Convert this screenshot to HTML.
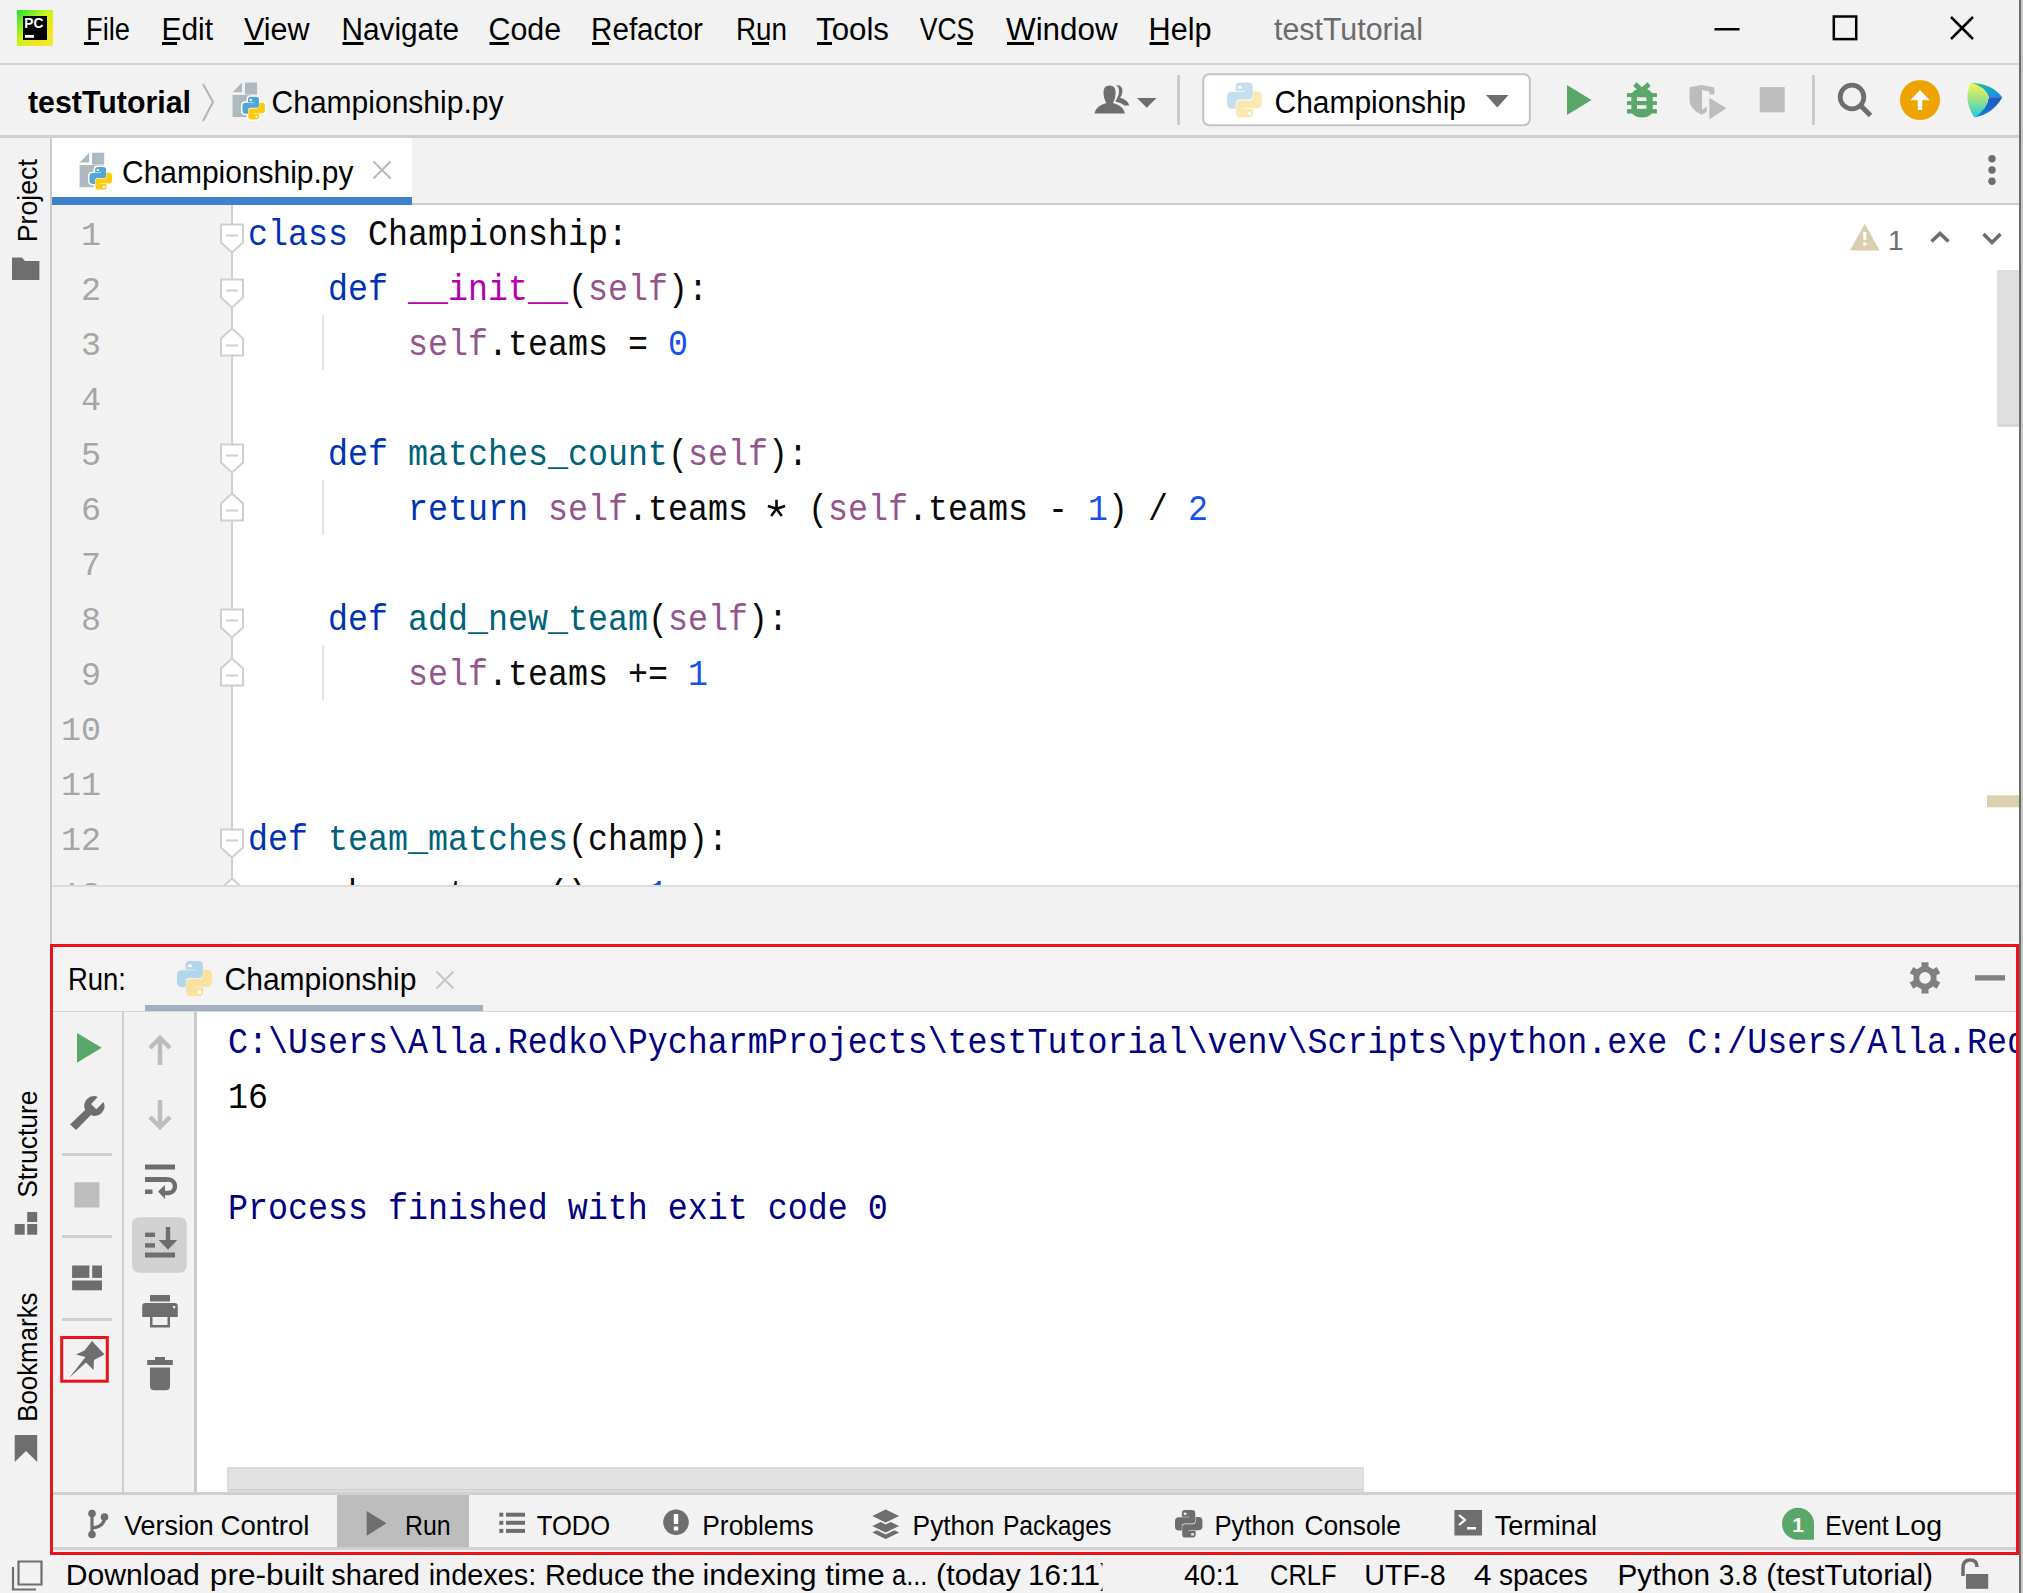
<!DOCTYPE html>
<html><head><meta charset="utf-8"><title>PyCharm</title>
<style>html,body{margin:0;padding:0;background:#f2f2f2;width:2023px;height:1593px;overflow:hidden}</style>
</head><body>
<svg width="2023" height="1593" viewBox="0 0 2023 1593" style="display:block"><rect x="0" y="0" width="2023" height="1593" fill="#f2f2f2" />
<rect x="0" y="63" width="2019" height="2" fill="#d5d5d5" />
<rect x="0" y="135" width="2019" height="3" fill="#cfcfcf" />
<rect x="50" y="138" width="2" height="806" fill="#c9c9c9" />
<rect x="52" y="138" width="360" height="59" fill="#ffffff" />
<rect x="52" y="197" width="360" height="8" fill="#3f82c9" />
<rect x="412" y="203" width="1607" height="2" fill="#cdcdcd" />
<rect x="52" y="205" width="180" height="680" fill="#f2f2f2" />
<rect x="232" y="205" width="1787" height="680" fill="#ffffff" />
<rect x="231" y="205" width="2" height="680" fill="#d0d0d0" />
<rect x="52" y="885" width="1967" height="2" fill="#dcdcdc" />
<rect x="232" y="942" width="1786" height="1" fill="#ffffff" />
<rect x="52" y="947" width="1964" height="64" fill="#f3f3f3" />
<rect x="52" y="1011" width="1964" height="1" fill="#d6d6d6" />
<rect x="145" y="1005" width="338" height="6" fill="#a5aebd" />
<rect x="52" y="1012" width="145" height="480" fill="#f2f2f2" />
<rect x="122" y="1012" width="2" height="480" fill="#cfcfcf" />
<rect x="194" y="1012" width="3" height="480" fill="#cbcbcb" />
<rect x="197" y="1012" width="1819" height="480" fill="#ffffff" />
<rect x="227" y="1467" width="1137" height="25" fill="#dcdcdc" />
<rect x="229" y="1469" width="1133" height="20" fill="#e2e2e2" />
<rect x="229" y="1489" width="1133" height="1" fill="#cccccc" />
<rect x="52" y="1492" width="1964" height="3" fill="#d0d0d0" />
<rect x="52" y="1495" width="1964" height="52" fill="#f2f2f2" />
<rect x="337" y="1495" width="132" height="52" fill="#bdbdbd" />
<rect x="52" y="1547" width="1964" height="3" fill="#cfcfcf" />
<rect x="2019" y="0" width="2" height="1593" fill="#6b6b6b" />
<rect x="2021" y="0" width="2" height="1593" fill="#c8c8c8" />
<text x="86" y="40" font-family="'Liberation Sans', sans-serif" font-size="31" fill="#000" font-weight="normal" textLength="44" lengthAdjust="spacingAndGlyphs" >File</text>
<rect x="84" y="42" width="15" height="3" fill="#000" />
<text x="161.5" y="40" font-family="'Liberation Sans', sans-serif" font-size="31" fill="#000" font-weight="normal" textLength="51.5" lengthAdjust="spacingAndGlyphs" >Edit</text>
<rect x="162" y="42" width="15" height="3" fill="#000" />
<text x="244" y="40" font-family="'Liberation Sans', sans-serif" font-size="31" fill="#000" font-weight="normal" textLength="65.6" lengthAdjust="spacingAndGlyphs" >View</text>
<rect x="244.3" y="42" width="19.6" height="3" fill="#000" />
<text x="341.5" y="40" font-family="'Liberation Sans', sans-serif" font-size="31" fill="#000" font-weight="normal" textLength="117.5" lengthAdjust="spacingAndGlyphs" >Navigate</text>
<rect x="342.5" y="42" width="21.0" height="3" fill="#000" />
<text x="488.5" y="40" font-family="'Liberation Sans', sans-serif" font-size="31" fill="#000" font-weight="normal" textLength="72.5" lengthAdjust="spacingAndGlyphs" >Code</text>
<rect x="489.5" y="42" width="19.3" height="3" fill="#000" />
<text x="591" y="40" font-family="'Liberation Sans', sans-serif" font-size="31" fill="#000" font-weight="normal" textLength="112" lengthAdjust="spacingAndGlyphs" >Refactor</text>
<rect x="592" y="42" width="17" height="3" fill="#000" />
<text x="736" y="40" font-family="'Liberation Sans', sans-serif" font-size="31" fill="#000" font-weight="normal" textLength="51" lengthAdjust="spacingAndGlyphs" >Run</text>
<rect x="752" y="42" width="17" height="3" fill="#000" />
<text x="816" y="40" font-family="'Liberation Sans', sans-serif" font-size="31" fill="#000" font-weight="normal" textLength="73" lengthAdjust="spacingAndGlyphs" >Tools</text>
<rect x="817" y="42" width="15" height="3" fill="#000" />
<text x="919.7" y="40" font-family="'Liberation Sans', sans-serif" font-size="31" fill="#000" font-weight="normal" textLength="54.6" lengthAdjust="spacingAndGlyphs" >VCS</text>
<rect x="957" y="42" width="15" height="3" fill="#000" />
<text x="1006" y="40" font-family="'Liberation Sans', sans-serif" font-size="31" fill="#000" font-weight="normal" textLength="111.7" lengthAdjust="spacingAndGlyphs" >Window</text>
<rect x="1007" y="42" width="27" height="3" fill="#000" />
<text x="1148.6" y="40" font-family="'Liberation Sans', sans-serif" font-size="31" fill="#000" font-weight="normal" textLength="63.0" lengthAdjust="spacingAndGlyphs" >Help</text>
<rect x="1149.6" y="42" width="19.0" height="3" fill="#000" />
<text x="1274" y="40" font-family="'Liberation Sans', sans-serif" font-size="31" fill="#6b6b6b" font-weight="normal" textLength="149" lengthAdjust="spacingAndGlyphs" >testTutorial</text>
<text x="28" y="112.5" font-family="'Liberation Sans', sans-serif" font-size="31" fill="#000" font-weight="bold" textLength="163" lengthAdjust="spacingAndGlyphs" >testTutorial</text>
<text x="271.5" y="112.5" font-family="'Liberation Sans', sans-serif" font-size="31" fill="#000" font-weight="normal" textLength="232" lengthAdjust="spacingAndGlyphs" >Championship.py</text>
<rect x="1203.2" y="74.3" width="326.6" height="51" rx="6" ry="6" fill="#fff" stroke="#c4c4c4" stroke-width="2"/>
<text x="1274.5" y="112.5" font-family="'Liberation Sans', sans-serif" font-size="31" fill="#000" font-weight="normal" textLength="191.5" lengthAdjust="spacingAndGlyphs" >Championship</text>
<rect x="1177" y="75" width="3" height="50" fill="#cbcbcb" />
<rect x="1812" y="75" width="3" height="50" fill="#cbcbcb" />
<text x="122" y="183" font-family="'Liberation Sans', sans-serif" font-size="31" fill="#000" font-weight="normal" textLength="231.5" lengthAdjust="spacingAndGlyphs" >Championship.py</text>
<text x="68" y="990" font-family="'Liberation Sans', sans-serif" font-size="31" fill="#000" font-weight="normal" textLength="58" lengthAdjust="spacingAndGlyphs" >Run:</text>
<text x="224.5" y="990" font-family="'Liberation Sans', sans-serif" font-size="31" fill="#000" font-weight="normal" textLength="192" lengthAdjust="spacingAndGlyphs" >Championship</text>
<text x="124.2" y="1535" font-family="'Liberation Sans', sans-serif" font-size="28" fill="#000" font-weight="normal" textLength="89.6" lengthAdjust="spacingAndGlyphs" >Version</text>
<text x="220.5" y="1535" font-family="'Liberation Sans', sans-serif" font-size="28" fill="#000" font-weight="normal" textLength="89.0" lengthAdjust="spacingAndGlyphs" >Control</text>
<text x="405" y="1535" font-family="'Liberation Sans', sans-serif" font-size="28" fill="#000" font-weight="normal" textLength="45.6" lengthAdjust="spacingAndGlyphs" >Run</text>
<text x="536.8" y="1535" font-family="'Liberation Sans', sans-serif" font-size="28" fill="#000" font-weight="normal" textLength="73.4" lengthAdjust="spacingAndGlyphs" >TODO</text>
<text x="702.3" y="1535" font-family="'Liberation Sans', sans-serif" font-size="28" fill="#000" font-weight="normal" textLength="111.3" lengthAdjust="spacingAndGlyphs" >Problems</text>
<text x="912.6" y="1535" font-family="'Liberation Sans', sans-serif" font-size="28" fill="#000" font-weight="normal" textLength="81.9" lengthAdjust="spacingAndGlyphs" >Python</text>
<text x="1002.9" y="1535" font-family="'Liberation Sans', sans-serif" font-size="28" fill="#000" font-weight="normal" textLength="108.5" lengthAdjust="spacingAndGlyphs" >Packages</text>
<text x="1214.4" y="1535" font-family="'Liberation Sans', sans-serif" font-size="28" fill="#000" font-weight="normal" textLength="80.2" lengthAdjust="spacingAndGlyphs" >Python</text>
<text x="1304.5" y="1535" font-family="'Liberation Sans', sans-serif" font-size="28" fill="#000" font-weight="normal" textLength="96.5" lengthAdjust="spacingAndGlyphs" >Console</text>
<text x="1494.7" y="1535" font-family="'Liberation Sans', sans-serif" font-size="28" fill="#000" font-weight="normal" textLength="102.3" lengthAdjust="spacingAndGlyphs" >Terminal</text>
<text x="1825.3" y="1535" font-family="'Liberation Sans', sans-serif" font-size="28" fill="#000" font-weight="normal" textLength="63.3" lengthAdjust="spacingAndGlyphs" >Event</text>
<text x="1894.5" y="1535" font-family="'Liberation Sans', sans-serif" font-size="28" fill="#000" font-weight="normal" textLength="47.5" lengthAdjust="spacingAndGlyphs" >Log</text>
<svg x="0" y="1553" width="1102.5" height="40"><text x="65.7" y="31.6" font-family="Liberation Sans, sans-serif" font-size="29.5" fill="#000" textLength="134.1" lengthAdjust="spacingAndGlyphs">Download</text><text x="209.8" y="31.6" font-family="Liberation Sans, sans-serif" font-size="29.5" fill="#000" textLength="114.2" lengthAdjust="spacingAndGlyphs">pre-built</text><text x="331.3" y="31.6" font-family="Liberation Sans, sans-serif" font-size="29.5" fill="#000" textLength="88.7" lengthAdjust="spacingAndGlyphs">shared</text><text x="428.7" y="31.6" font-family="Liberation Sans, sans-serif" font-size="29.5" fill="#000" textLength="107.5" lengthAdjust="spacingAndGlyphs">indexes:</text><text x="544.9" y="31.6" font-family="Liberation Sans, sans-serif" font-size="29.5" fill="#000" textLength="99.5" lengthAdjust="spacingAndGlyphs">Reduce</text><text x="651.7" y="31.6" font-family="Liberation Sans, sans-serif" font-size="29.5" fill="#000" textLength="43.4" lengthAdjust="spacingAndGlyphs">the</text><text x="702.5" y="31.6" font-family="Liberation Sans, sans-serif" font-size="29.5" fill="#000" textLength="114.1" lengthAdjust="spacingAndGlyphs">indexing</text><text x="825.3" y="31.6" font-family="Liberation Sans, sans-serif" font-size="29.5" fill="#000" textLength="59.3" lengthAdjust="spacingAndGlyphs">time</text><text x="892" y="31.6" font-family="Liberation Sans, sans-serif" font-size="29.5" fill="#000" textLength="35.4" lengthAdjust="spacingAndGlyphs">a...</text><text x="936" y="31.6" font-family="Liberation Sans, sans-serif" font-size="29.5" fill="#000" textLength="84.8" lengthAdjust="spacingAndGlyphs">(today</text><text x="1028.1" y="31.6" font-family="Liberation Sans, sans-serif" font-size="29.5" fill="#000" textLength="81.9" lengthAdjust="spacingAndGlyphs">16:11)</text></svg>
<text x="1183.9" y="1584.6" font-family="'Liberation Sans', sans-serif" font-size="29.5" fill="#000" font-weight="normal" textLength="55.6" lengthAdjust="spacingAndGlyphs" >40:1</text>
<text x="1270.1" y="1584.6" font-family="'Liberation Sans', sans-serif" font-size="29.5" fill="#000" font-weight="normal" textLength="66.4" lengthAdjust="spacingAndGlyphs" >CRLF</text>
<text x="1364.3" y="1584.6" font-family="'Liberation Sans', sans-serif" font-size="29.5" fill="#000" font-weight="normal" textLength="81.3" lengthAdjust="spacingAndGlyphs" >UTF-8</text>
<text x="1473.7" y="1584.6" font-family="'Liberation Sans', sans-serif" font-size="29.5" fill="#000" font-weight="normal" textLength="17.7" lengthAdjust="spacingAndGlyphs" >4</text>
<text x="1498.9" y="1584.6" font-family="'Liberation Sans', sans-serif" font-size="29.5" fill="#000" font-weight="normal" textLength="89.0" lengthAdjust="spacingAndGlyphs" >spaces</text>
<text x="1617.5" y="1584.6" font-family="'Liberation Sans', sans-serif" font-size="29.5" fill="#000" font-weight="normal" textLength="92.6" lengthAdjust="spacingAndGlyphs" >Python</text>
<text x="1718.8" y="1584.6" font-family="'Liberation Sans', sans-serif" font-size="29.5" fill="#000" font-weight="normal" textLength="38.8" lengthAdjust="spacingAndGlyphs" >3.8</text>
<text x="1766.2" y="1584.6" font-family="'Liberation Sans', sans-serif" font-size="29.5" fill="#000" font-weight="normal" textLength="166.9" lengthAdjust="spacingAndGlyphs" >(testTutorial)</text>
<text transform="translate(37,242.2) rotate(-90)" x="0" y="0" font-family="'Liberation Sans', sans-serif" font-size="28" fill="#000" textLength="83.0" lengthAdjust="spacingAndGlyphs">Project</text>
<text transform="translate(37,1197.8) rotate(-90)" x="0" y="0" font-family="'Liberation Sans', sans-serif" font-size="28" fill="#000" textLength="107.3" lengthAdjust="spacingAndGlyphs">Structure</text>
<text transform="translate(37,1421.8) rotate(-90)" x="0" y="0" font-family="'Liberation Sans', sans-serif" font-size="28" fill="#000" textLength="129.3" lengthAdjust="spacingAndGlyphs">Bookmarks</text>
<svg x="52" y="205" width="1967" height="680" overflow="hidden"><g transform="translate(-52,-205)">
<text x="101" y="245" text-anchor="end" font-family="'Liberation Mono', monospace" font-size="33.33" fill="#a6a6a6">1</text>
<text transform="translate(0,245) scale(1,1.1)" y="0" font-family="'Liberation Mono', monospace" font-size="33.33" xml:space="preserve"><tspan x="248" fill="#0033b3">class</tspan><tspan x="368" fill="#080808">Championship:</tspan></text>
<text x="101" y="300" text-anchor="end" font-family="'Liberation Mono', monospace" font-size="33.33" fill="#a6a6a6">2</text>
<text transform="translate(0,300) scale(1,1.1)" y="0" font-family="'Liberation Mono', monospace" font-size="33.33" xml:space="preserve"><tspan x="328" fill="#0033b3">def</tspan><tspan x="408" fill="#b200b2">__init__</tspan><tspan x="568" fill="#080808">(</tspan><tspan x="588" fill="#94558d">self</tspan><tspan x="668" fill="#080808">):</tspan></text>
<text x="101" y="355" text-anchor="end" font-family="'Liberation Mono', monospace" font-size="33.33" fill="#a6a6a6">3</text>
<text transform="translate(0,355) scale(1,1.1)" y="0" font-family="'Liberation Mono', monospace" font-size="33.33" xml:space="preserve"><tspan x="408" fill="#94558d">self</tspan><tspan x="488" fill="#080808">.teams = </tspan><tspan x="668" fill="#1750eb">0</tspan></text>
<text x="101" y="410" text-anchor="end" font-family="'Liberation Mono', monospace" font-size="33.33" fill="#a6a6a6">4</text>
<text x="101" y="465" text-anchor="end" font-family="'Liberation Mono', monospace" font-size="33.33" fill="#a6a6a6">5</text>
<text transform="translate(0,465) scale(1,1.1)" y="0" font-family="'Liberation Mono', monospace" font-size="33.33" xml:space="preserve"><tspan x="328" fill="#0033b3">def</tspan><tspan x="408" fill="#00627a">matches_count</tspan><tspan x="668" fill="#080808">(</tspan><tspan x="688" fill="#94558d">self</tspan><tspan x="768" fill="#080808">):</tspan></text>
<text x="101" y="520" text-anchor="end" font-family="'Liberation Mono', monospace" font-size="33.33" fill="#a6a6a6">6</text>
<text transform="translate(0,520) scale(1,1.1)" y="0" font-family="'Liberation Mono', monospace" font-size="33.33" xml:space="preserve"><tspan x="408" fill="#0033b3">return</tspan><tspan x="548" fill="#94558d">self</tspan><tspan x="628" fill="#080808">.teams   (</tspan><tspan x="828" fill="#94558d">self</tspan><tspan x="908" fill="#080808">.teams - </tspan><tspan x="1088" fill="#1750eb">1</tspan><tspan x="1108" fill="#080808">) / </tspan><tspan x="1188" fill="#1750eb">2</tspan></text>
<text x="101" y="575" text-anchor="end" font-family="'Liberation Mono', monospace" font-size="33.33" fill="#a6a6a6">7</text>
<text x="101" y="630" text-anchor="end" font-family="'Liberation Mono', monospace" font-size="33.33" fill="#a6a6a6">8</text>
<text transform="translate(0,630) scale(1,1.1)" y="0" font-family="'Liberation Mono', monospace" font-size="33.33" xml:space="preserve"><tspan x="328" fill="#0033b3">def</tspan><tspan x="408" fill="#00627a">add_new_team</tspan><tspan x="648" fill="#080808">(</tspan><tspan x="668" fill="#94558d">self</tspan><tspan x="748" fill="#080808">):</tspan></text>
<text x="101" y="685" text-anchor="end" font-family="'Liberation Mono', monospace" font-size="33.33" fill="#a6a6a6">9</text>
<text transform="translate(0,685) scale(1,1.1)" y="0" font-family="'Liberation Mono', monospace" font-size="33.33" xml:space="preserve"><tspan x="408" fill="#94558d">self</tspan><tspan x="488" fill="#080808">.teams += </tspan><tspan x="688" fill="#1750eb">1</tspan></text>
<text x="101" y="740" text-anchor="end" font-family="'Liberation Mono', monospace" font-size="33.33" fill="#a6a6a6">10</text>
<text x="101" y="795" text-anchor="end" font-family="'Liberation Mono', monospace" font-size="33.33" fill="#a6a6a6">11</text>
<text x="101" y="850" text-anchor="end" font-family="'Liberation Mono', monospace" font-size="33.33" fill="#a6a6a6">12</text>
<text transform="translate(0,850) scale(1,1.1)" y="0" font-family="'Liberation Mono', monospace" font-size="33.33" xml:space="preserve"><tspan x="248" fill="#0033b3">def</tspan><tspan x="328" fill="#00627a">team_matches</tspan><tspan x="568" fill="#080808">(champ):</tspan></text>
<text x="101" y="905" text-anchor="end" font-family="'Liberation Mono', monospace" font-size="33.33" fill="#a6a6a6">13</text>
<text transform="translate(0,905) scale(1,1.1)" y="0" font-family="'Liberation Mono', monospace" font-size="33.33" xml:space="preserve"><tspan x="328" fill="#080808">champ.teams() = </tspan><tspan x="648" fill="#1750eb">1</tspan></text>
<path d="M776.5,508.8 L776.50,499.80 M776.5,508.8 L785.06,506.02 M776.5,508.8 L781.79,516.08 M776.5,508.8 L771.21,516.08 M776.5,508.8 L767.94,506.02" stroke="#080808" stroke-width="2.6" stroke-linecap="butt"/>
<rect x="322" y="315" width="2" height="55" fill="#e4e4e4"/>
<rect x="322" y="480" width="2" height="55" fill="#e4e4e4"/>
<rect x="322" y="645" width="2" height="55" fill="#e4e4e4"/>
<path d="M221,224.5 H243 V242.5 L232,252.5 L221,242.5 Z" fill="#fff" stroke="#cfcfcf" stroke-width="2"/>
<rect x="226" y="234.5" width="12" height="2" fill="#cfcfcf"/>
<path d="M221,279.5 H243 V297.5 L232,307.5 L221,297.5 Z" fill="#fff" stroke="#cfcfcf" stroke-width="2"/>
<rect x="226" y="289.5" width="12" height="2" fill="#cfcfcf"/>
<path d="M221,444.5 H243 V462.5 L232,472.5 L221,462.5 Z" fill="#fff" stroke="#cfcfcf" stroke-width="2"/>
<rect x="226" y="454.5" width="12" height="2" fill="#cfcfcf"/>
<path d="M221,609.5 H243 V627.5 L232,637.5 L221,627.5 Z" fill="#fff" stroke="#cfcfcf" stroke-width="2"/>
<rect x="226" y="619.5" width="12" height="2" fill="#cfcfcf"/>
<path d="M221,829.5 H243 V847.5 L232,857.5 L221,847.5 Z" fill="#fff" stroke="#cfcfcf" stroke-width="2"/>
<rect x="226" y="839.5" width="12" height="2" fill="#cfcfcf"/>
<path d="M232,328.5 L243,338.5 V355.5 H221 V338.5 Z" fill="#fff" stroke="#cfcfcf" stroke-width="2"/>
<rect x="226" y="344.5" width="12" height="2" fill="#cfcfcf"/>
<path d="M232,493.5 L243,503.5 V520.5 H221 V503.5 Z" fill="#fff" stroke="#cfcfcf" stroke-width="2"/>
<rect x="226" y="509.5" width="12" height="2" fill="#cfcfcf"/>
<path d="M232,658.5 L243,668.5 V685.5 H221 V668.5 Z" fill="#fff" stroke="#cfcfcf" stroke-width="2"/>
<rect x="226" y="674.5" width="12" height="2" fill="#cfcfcf"/>
<path d="M232,878.5 L243,888.5 V905.5 H221 V888.5 Z" fill="#fff" stroke="#cfcfcf" stroke-width="2"/>
<rect x="226" y="894.5" width="12" height="2" fill="#cfcfcf"/>
</g></svg>
<svg x="197" y="1012" width="1819" height="455" overflow="hidden"><g transform="translate(-197,-1012)">
<text transform="translate(228,1053.3) scale(1,1.1)" x="0" y="0" font-family="'Liberation Mono', monospace" font-size="33.33" fill="#000080" xml:space="preserve">C:\Users\Alla.Redko\PycharmProjects\testTutorial\venv\Scripts\python.exe C:/Users/Alla.Redko/PycharmProjects/testTutorial/Championship.py</text>
<text transform="translate(228,1108.4) scale(1,1.1)" x="0" y="0" font-family="'Liberation Mono', monospace" font-size="33.33" fill="#000" xml:space="preserve">16</text>
<text transform="translate(228,1218.5) scale(1,1.1)" x="0" y="0" font-family="'Liberation Mono', monospace" font-size="33.33" fill="#000080" xml:space="preserve">Process finished with exit code 0</text>
</g></svg>
<defs>
<path id="pyB" d="M5.6,2.6 Q5.6,0 8.4,0 H14 Q16.6,0 16.6,2.6 V8.4 Q16.6,11 14,11 H8.2 Q5.6,11 5.6,13.6 V16.9 H3 Q0,16.9 0,13.6 V9.2 Q0,6 3.2,6 H11.6 V5.5 H5.6 Z"/>
<path id="pyY" d="M16.9,20 Q16.9,22.6 14.1,22.6 H8.5 Q5.9,22.6 5.9,20 V14.2 Q5.9,11.6 8.5,11.6 H14.3 Q16.9,11.6 16.9,9 V5.7 H19.5 Q22.5,5.7 22.5,9 V13.4 Q22.5,16.6 19.3,16.6 H10.9 V17.1 H16.9 Z"/>
<linearGradient id="pcg" x1="0" y1="0" x2="1" y2="1">
<stop offset="0" stop-color="#21e03a"/><stop offset="0.45" stop-color="#c9f51c"/><stop offset="0.75" stop-color="#f7e41a"/><stop offset="1" stop-color="#e8f04a"/></linearGradient>
<linearGradient id="gemA" x1="0" y1="0" x2="0" y2="1">
<stop offset="0" stop-color="#f8f74a"/><stop offset="0.5" stop-color="#9ae28a"/><stop offset="1" stop-color="#1ecce0"/></linearGradient>
<linearGradient id="gemB" x1="0" y1="0" x2="1" y2="0.6">
<stop offset="0" stop-color="#23d07a"/><stop offset="1" stop-color="#1a8fe8"/></linearGradient>
<linearGradient id="gemC" x1="1" y1="0" x2="0" y2="1">
<stop offset="0" stop-color="#2a4fb8"/><stop offset="1" stop-color="#0d88e0"/></linearGradient>
</defs>
<rect x="17" y="10" width="36" height="36" fill="url(#pcg)"/>
<rect x="23" y="16" width="24" height="24" fill="#000"/>
<text x="24.3" y="28.3" font-family="Liberation Sans, sans-serif" font-weight="bold" font-size="14" fill="#fff" textLength="19" lengthAdjust="spacingAndGlyphs">PC</text>
<rect x="25" y="35" width="9" height="2.8" fill="#fff"/>
<rect x="1714.5" y="28" width="25" height="2.5" fill="#000" />
<rect x="1833.8" y="16.5" width="22.4" height="22.6" fill="none" stroke="#000" stroke-width="2.5"/>
<path d="M1951,17 L1973,39 M1973,17 L1951,39" stroke="#000" stroke-width="2.5"/>
<path d="M203,84 L213,102 L203,121" fill="none" stroke="#b4b4b4" stroke-width="2"/>
<g transform="translate(232.5,82.5)">
<path d="M0,9.7 L9.5,0 V9.7 Z" fill="#afb9c0"/>
<rect x="12.5" y="0" width="12.1" height="11.9" fill="#afb9c0"/>
<rect x="0" y="12.4" width="24.6" height="22.1" fill="#afb9c0"/>
</g>
<g transform="translate(242.4,96.8) scale(1.0)">
<use href="#pyB" fill="#ffffff" stroke="#ffffff" stroke-width="3.0" stroke-linejoin="round"/>
<use href="#pyY" fill="#ffffff" stroke="#ffffff" stroke-width="3.0" stroke-linejoin="round"/>
<use href="#pyB" fill="#53a7d6"/><use href="#pyY" fill="#fecb13"/>
<rect x="7.2" y="2.2" width="2.2" height="1.8" fill="#fff"/><rect x="13.3" y="19" width="2.1" height="1.9" fill="#fff"/>
</g>
<g transform="translate(79.6,152.7)">
<path d="M0,9.7 L9.5,0 V9.7 Z" fill="#afb9c0"/>
<rect x="12.5" y="0" width="12.1" height="11.9" fill="#afb9c0"/>
<rect x="0" y="12.4" width="24.6" height="22.1" fill="#afb9c0"/>
</g>
<g transform="translate(89.5,167.0) scale(1.0)">
<use href="#pyB" fill="#ffffff" stroke="#ffffff" stroke-width="3.0" stroke-linejoin="round"/>
<use href="#pyY" fill="#ffffff" stroke="#ffffff" stroke-width="3.0" stroke-linejoin="round"/>
<use href="#pyB" fill="#53a7d6"/><use href="#pyY" fill="#fecb13"/>
<rect x="7.2" y="2.2" width="2.2" height="1.8" fill="#fff"/><rect x="13.3" y="19" width="2.1" height="1.9" fill="#fff"/>
</g>
<path d="M373.5,161.5 L390.5,178.5 M390.5,161.5 L373.5,178.5" stroke="#b5bcc0" stroke-width="2.2"/>
<path d="M1116,85.3 Q1122.6,85 1122.4,91 Q1122,96 1119.9,97.6 Q1128,100 1129.2,105.6 H1124.2 Q1122,103 1115,101.5 Q1119,96 1119,91 Q1119,87 1116,85.3 Z" fill="#6e6e6e"/>
<path d="M1094.5,113.6 Q1095.5,106 1106.5,103 Q1103.5,99 1103.5,92 Q1103.5,85.5 1109.6,85.5 Q1115.6,85.5 1115.6,92 Q1115.6,99 1112.8,103 Q1124,106 1124.9,113.6 Z" fill="#6e6e6e" stroke="#f2f2f2" stroke-width="3" paint-order="stroke"/>
<path d="M1137,98 H1156.5 L1146.75,107.7 Z" fill="#6e6e6e"/>
<g transform="translate(1227,82.5) scale(1.55)">
<use href="#pyB" fill="#c6dfee"/><use href="#pyY" fill="#f9e9b0"/>
<rect x="7.2" y="2.2" width="2.2" height="1.8" fill="#fff"/><rect x="13.3" y="19" width="2.1" height="1.9" fill="#fff"/>
</g>
<path d="M1486,95 H1508.5 L1497.25,107.5 Z" fill="#6e6e6e"/>
<path d="M1567,85 L1591.5,100 L1567,115 Z" fill="#59a869"/>
<path d="M1634.8,84.1 L1641.9,90.5 L1649.1,84.1" fill="none" stroke="#59a869" stroke-width="5"/>
<g fill="#59a869"><path d="M1637,89.3 Q1642,87 1647,89.3 Q1651.5,91 1652.7,95 V109 Q1652.7,117.5 1641.9,117.5 Q1631.4,117.5 1631.4,109 V95 Q1632.5,91 1637,89.3 Z"/><rect x="1627" y="93.1" width="29.9" height="4"/><rect x="1627" y="101.2" width="29.9" height="3.7"/><rect x="1627" y="109.2" width="29.9" height="4.3"/></g>
<rect x="1637" y="97.3" width="9.4" height="3.7" fill="#f2f2f2"/><rect x="1637" y="105.2" width="9.4" height="3.6" fill="#f2f2f2"/>
<rect x="1759.7" y="87.1" width="25" height="25.2" fill="#bdbdbd" />
<path d="M1689.5,87.2 L1701.7,85.1 L1714.4,87.5 V94.6 H1709.4 V91.6 L1702,89.9 V109.8 L1706.7,106.5 V111.8 L1701.7,114.8 Q1689.5,109 1689.5,100 Z" fill="#bdbdbd"/>
<path d="M1709.4,97.7 L1726.5,108.2 L1709.4,119.2 Z" fill="#bdbdbd"/>
<circle cx="1852" cy="97" r="11.8" fill="none" stroke="#6e6e6e" stroke-width="4.8"/>
<path d="M1860,105 L1870.5,115.5" stroke="#6e6e6e" stroke-width="5"/>
<circle cx="1920" cy="100" r="20" fill="#eea300"/>
<path d="M1910.3,100.3 L1920,90 L1929.8,100.3 Z M1917.8,100 H1922.2 V110 H1917.8 Z" fill="#fff"/>
<path d="M1971.1,82.7 Q1992,83.5 2002.3,97.3 H1988.9 Q1985.5,87 1971.1,82.7 Z" fill="url(#gemB)"/>
<path d="M1988.9,97.3 H2002.3 Q1993,114 1974.4,117.5 Q1987.5,108 1988.9,97.3 Z" fill="url(#gemC)"/>
<path d="M1971.1,82.7 Q1985.5,87 1988.9,97.3 Q1987.5,108 1974.4,117.5 Q1962.2,99 1971.1,82.7 Z" fill="url(#gemA)"/>
<circle cx="1992" cy="158.7" r="3.7" fill="#6e6e6e"/>
<circle cx="1992" cy="170" r="3.7" fill="#6e6e6e"/>
<circle cx="1992" cy="181.3" r="3.7" fill="#6e6e6e"/>
<path d="M12,257.5 H22 L25,261 H39.4 V280 H12 Z" fill="#6e6e6e"/>
<g fill="#6e6e6e"><rect x="14.7" y="1224" width="10" height="10.7"/><rect x="27.2" y="1224" width="10" height="10.7"/><rect x="27.2" y="1212" width="10" height="10"/></g>
<path d="M14.7,1435 H37.2 V1462 L26,1451 L14.7,1462 Z" fill="#6e6e6e"/>
<path d="M1864.8,223.7 L1879.7,250.4 H1850 Z" fill="#d9cfae"/>
<rect x="1863.3" y="232" width="3" height="8" fill="#fff"/><rect x="1863.3" y="242.5" width="3" height="3.2" fill="#fff"/>
<text x="1888" y="249.7" font-family="'Liberation Sans', sans-serif" font-size="28" fill="#6e6e6e" font-weight="normal" >1</text>
<path d="M1931.5,241.5 L1940,233.5 L1948.5,241.5" fill="none" stroke="#6e6e6e" stroke-width="3.6"/>
<path d="M1983.5,234 L1992,242.5 L2000.5,234" fill="none" stroke="#6e6e6e" stroke-width="3.6"/>
<rect x="1997.2" y="270" width="21.8" height="157" fill="#dcdcdc" />
<rect x="1999.5" y="272" width="19.5" height="152.5" fill="#e0e0e0" />
<rect x="1999.5" y="424.5" width="19.5" height="1.2" fill="#cfcfcf" />
<rect x="1987" y="795.3" width="32" height="12" fill="#dad0ae" />
<g transform="translate(177,961) scale(1.55)">
<use href="#pyB" fill="#b3d6ea"/><use href="#pyY" fill="#f7e29e"/>
<rect x="7.2" y="2.2" width="2.2" height="1.8" fill="#fff"/><rect x="13.3" y="19" width="2.1" height="1.9" fill="#fff"/>
</g>
<path d="M436.5,971.5 L453.5,988.5 M453.5,971.5 L436.5,988.5" stroke="#c3c7c7" stroke-width="2.2"/>
<path d="M1921.40,962.31 L1928.60,962.31 L1928.45,966.62 L1933.05,969.27 L1936.70,966.99 L1940.30,973.22 L1936.50,975.25 L1936.50,980.55 L1940.30,982.58 L1936.70,988.81 L1933.05,986.53 L1928.45,989.18 L1928.60,993.49 L1921.40,993.49 L1921.55,989.18 L1916.95,986.53 L1913.30,988.81 L1909.70,982.58 L1913.50,980.55 L1913.50,975.25 L1909.70,973.22 L1913.30,966.99 L1916.95,969.27 L1921.55,966.62 Z" fill="#808080"/>
<circle cx="1925" cy="977.9" r="5.8" fill="#f3f3f3"/>
<rect x="1975" y="975.2" width="30" height="5.3" fill="#808080" />
<path d="M77,1033 L101.7,1047.8 L77,1062.7 Z" fill="#59a869"/>
<path d="M70.1,1124.5 L85.1,1109.9 A9.8,9.8 0 0 1 97.8,1096.9 L91.1,1104.1 L96.3,1109.3 L103.6,1102.1 A9.8,9.8 0 0 1 90.9,1115.1 L76.1,1130 Z" fill="#6e6e6e"/>
<rect x="62" y="1153" width="50" height="3" fill="#cfcfcf" />
<rect x="74.4" y="1182.3" width="25" height="25.2" fill="#bdbdbd" />
<rect x="62" y="1235" width="50" height="3" fill="#cfcfcf" />
<g fill="#6e6e6e"><rect x="72.1" y="1265.5" width="17.3" height="12.4"/><rect x="92.2" y="1265.5" width="9.8" height="12.4"/><rect x="72.1" y="1280.5" width="29.9" height="9.8"/></g>
<rect x="62" y="1318" width="50" height="3" fill="#cfcfcf" />
<rect x="61.7" y="1337.5" width="45.6" height="43.7" fill="none" stroke="#e8141c" stroke-width="3"/>
<path d="M69,1378 L85.5,1357 L76,1354.5 L84.5,1350.5 L92,1341 L104.5,1354.5 L94,1360 L93.5,1370 L86,1362.5 Z" fill="#6e6e6e"/>
<path d="M160,1065 V1038 M150,1048 L160,1038 L170,1048" fill="none" stroke="#bdbdbd" stroke-width="4.5"/>
<path d="M160,1100 V1127 M150,1117 L160,1127 L170,1117" fill="none" stroke="#bdbdbd" stroke-width="4.5"/>
<g fill="#6e6e6e"><rect x="145" y="1164.5" width="30" height="5"/><rect x="145" y="1177" width="22" height="5"/><rect x="145" y="1189.5" width="7.5" height="4.5"/></g>
<path d="M167,1179.5 H169 A6.8,6.8 0 0 1 169,1193 H163" fill="none" stroke="#6e6e6e" stroke-width="4.5"/>
<path d="M158,1191.5 L165,1185 V1199 Z" fill="#6e6e6e"/>
<rect x="132.1" y="1217.2" width="54.7" height="55.5" rx="7" fill="#d1d1d1"/>
<g fill="#6e6e6e"><rect x="145" y="1232.6" width="10" height="4.4"/><rect x="145" y="1243.2" width="10" height="4.4"/><rect x="145" y="1252.5" width="30" height="5"/><rect x="165.8" y="1227" width="4.4" height="14"/><path d="M158.7,1240 H177.3 L168,1249.8 Z"/></g>
<g fill="#6e6e6e"><rect x="150" y="1295" width="20" height="6.5"/><path d="M142.2,1306 Q142.2,1303 145.2,1303 H174.8 Q177.8,1303 177.8,1306 V1317 H142.2 Z"/><path d="M150,1314 H170 V1327.5 H150 Z M152.5,1317 V1325 H167.5 V1317 Z" fill-rule="evenodd"/></g>
<rect x="173" y="1306" width="2.2" height="2.2" fill="#f2f2f2" />
<g fill="#6e6e6e"><rect x="155" y="1357" width="10" height="4"/><rect x="147.2" y="1360" width="25.6" height="5"/><path d="M150,1367.5 H170 V1386 Q170,1390.2 166,1390.2 H154 Q150,1390.2 150,1386 Z"/></g>
<g fill="#6e6e6e"><circle cx="92" cy="1513.5" r="3.8"/><circle cx="92" cy="1534.5" r="3.8"/><circle cx="104.5" cy="1517" r="3.8"/></g>
<path d="M92,1513.5 V1534.5 M104.5,1517 Q104.5,1527 92,1528" fill="none" stroke="#6e6e6e" stroke-width="3.2"/>
<path d="M366.7,1511 L386.5,1523.3 L366.7,1535.7 Z" fill="#6e6e6e"/>
<g fill="#6e6e6e"><rect x="499.3" y="1512.7" width="4" height="4"/><rect x="506" y="1512.7" width="19" height="4"/><rect x="499.3" y="1520.8" width="4" height="4"/><rect x="506" y="1520.8" width="19" height="4"/><rect x="499.3" y="1528.9" width="4" height="4"/><rect x="506" y="1528.9" width="19" height="4"/></g>
<circle cx="676" cy="1522.3" r="12.8" fill="#6e6e6e"/><rect x="673.8" y="1514" width="4.4" height="10" fill="#fff"/><rect x="673.8" y="1526.5" width="4.4" height="4" fill="#fff"/>
<g fill="#6e6e6e" stroke="#f2f2f2" stroke-width="1.8"><path d="M885.7,1525 L901,1532.5 L885.7,1540 L870.4,1532.5 Z"/><path d="M885.7,1518.5 L901,1526 L885.7,1533.5 L870.4,1526 Z"/><path d="M885.7,1508.5 L901,1516 L885.7,1523.5 L870.4,1516 Z"/></g>
<g transform="translate(1175,1510) scale(1.22)">
<use href="#pyB" fill="#6e6e6e"/><use href="#pyY" fill="#6e6e6e"/>
<rect x="7.2" y="2.2" width="2.2" height="1.8" fill="#f2f2f2"/><rect x="13.3" y="19" width="2.1" height="1.9" fill="#f2f2f2"/>
</g>
<rect x="1454.4" y="1510" width="27.6" height="25.5" fill="#6e6e6e"/>
<path d="M1459,1515 L1465,1520 L1459,1525" fill="none" stroke="#fff" stroke-width="2.2"/><rect x="1467" y="1527" width="9" height="2.5" fill="#fff"/>
<path d="M1814,1523.8 A16,16 0 1 0 1798,1539.8 H1814 Z" fill="#59a869"/>
<text x="1798" y="1532" text-anchor="middle" font-family="Liberation Sans, sans-serif" font-weight="bold" font-size="21" fill="#fff">1</text>
<path d="M18.5,1561.5 H41.5 V1584.5 H18.5 Z" fill="none" stroke="#6e6e6e" stroke-width="2.2"/>
<path d="M13,1567 V1589.5 H36" fill="none" stroke="#6e6e6e" stroke-width="2.2"/>
<path d="M1963,1576 V1568 Q1963,1560 1970,1560 Q1977,1560 1977,1567" fill="none" stroke="#6e6e6e" stroke-width="3.5"/>
<rect x="1966" y="1574" width="22.2" height="14.8" fill="#6e6e6e" />
<rect x="51.5" y="945.5" width="1966" height="608" fill="none" stroke="#e8141c" stroke-width="3"/></svg>
</body></html>
